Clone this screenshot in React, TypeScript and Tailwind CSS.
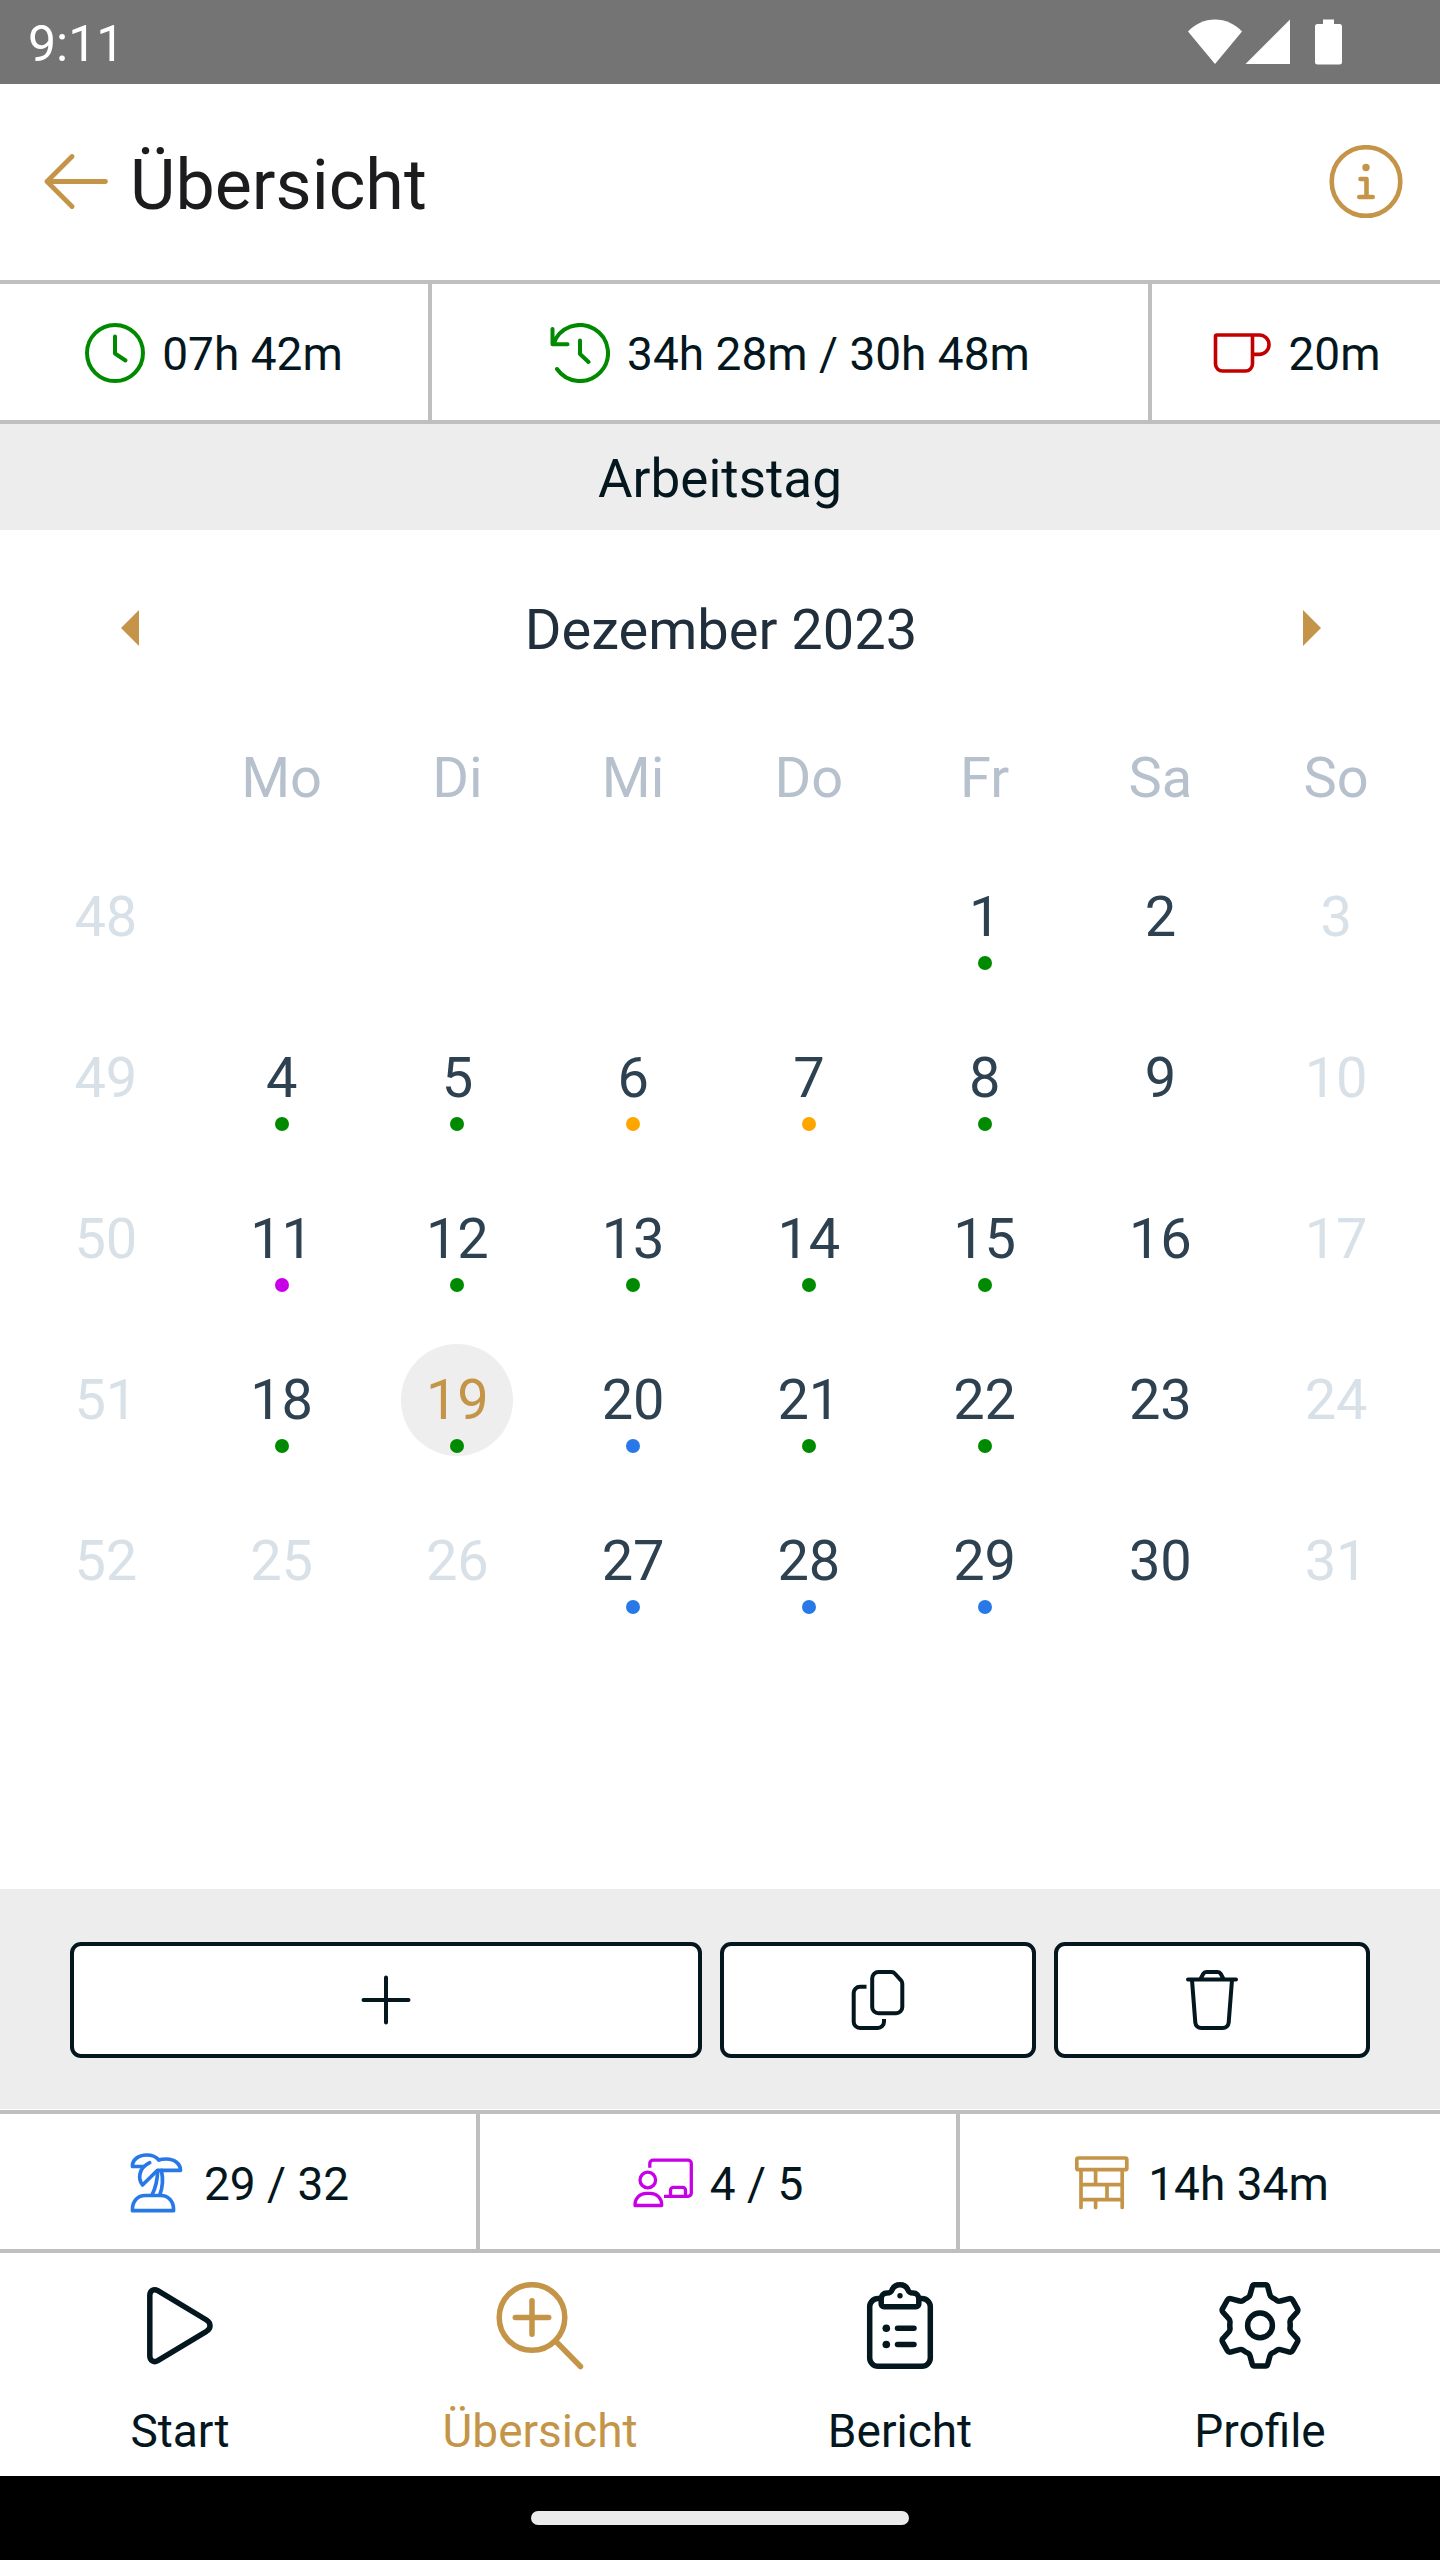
import type { ReactNode } from "react"
import clsx from "clsx"

type Mark = "green" | "orange" | "purple" | "blue"

const markColors: Record<Mark, string> = {
  green: "bg-[#008a00]",
  orange: "bg-[#ffa500]",
  purple: "bg-[#c800e8]",
  blue: "bg-[#2878e8]",
}

const weekdays = ["Mo", "Di", "Mi", "Do", "Fr", "Sa", "So"]

const weeks = [
  { week: 48, days: [null, null, null, null, 1, 2, 3] },
  { week: 49, days: [4, 5, 6, 7, 8, 9, 10] },
  { week: 50, days: [11, 12, 13, 14, 15, 16, 17] },
  { week: 51, days: [18, 19, 20, 21, 22, 23, 24] },
  { week: 52, days: [25, 26, 27, 28, 29, 30, 31] },
]

const marks: Record<number, Mark> = {
  1: "green",
  4: "green",
  5: "green",
  6: "orange",
  7: "orange",
  8: "green",
  11: "purple",
  12: "green",
  13: "green",
  14: "green",
  15: "green",
  18: "green",
  19: "green",
  20: "blue",
  21: "green",
  22: "green",
  27: "blue",
  28: "blue",
  29: "blue",
}

// Sundays and public holidays
const daysOff = [3, 10, 17, 24, 25, 26, 31]
const selectedDay = 19

function StatIcon({ className, strokeWidth = 4, children }: { className?: string; strokeWidth?: number; children: ReactNode }) {
  return (
    <svg
      viewBox="0 0 60 60"
      className={clsx("size-[60px] shrink-0", className)}
      fill="none"
      stroke="currentColor"
      strokeWidth={strokeWidth}
      strokeLinecap="round"
      strokeLinejoin="round"
      aria-hidden="true"
    >
      {children}
    </svg>
  )
}

function TabIcon({ children }: { children: ReactNode }) {
  return (
    <svg
      viewBox="0 0 88 88"
      className="size-[88px]"
      fill="none"
      stroke="currentColor"
      strokeWidth={5.5}
      strokeLinecap="round"
      strokeLinejoin="round"
      aria-hidden="true"
    >
      {children}
    </svg>
  )
}

function Stat({ icon, children }: { icon: ReactNode; children: ReactNode }) {
  return (
    <div className="flex items-center justify-center gap-[17px] border-r-4 border-[#bfbfbf] pt-0.5 last:border-r-0">
      {icon}
      <span className="whitespace-nowrap pt-0.5 text-[46px] leading-[54px]">{children}</span>
    </div>
  )
}

function StatusBar() {
  return (
    <div className="flex h-[84px] items-center justify-between bg-[#747474] pr-[98px] pl-7 text-white">
      <span className="pt-1 text-[50px] leading-none">9:11</span>
      <div className="flex items-center">
        <svg viewBox="0 0 54 46" className="h-[46px] w-[54px]" fill="currentColor" aria-hidden="true">
          <path d="M0 12.500 C7 5 16.500 0.500 27 0.500 S47 5 54 12.500 L27 45 Z" />
        </svg>
        <svg viewBox="0 0 46 46" className="ml-[3px] h-[46px] w-[46px]" fill="currentColor" aria-hidden="true">
          <path d="M45 0.500 V45 H0.500 Z" />
        </svg>
        <svg viewBox="0 0 27 46" className="ml-6 h-[46px] w-[27px]" fill="currentColor" aria-hidden="true">
          <path d="M8 0.500 H19 V5 H24.500 A2.500 2.500 0 0 1 27 7.500 V43 A2.500 2.500 0 0 1 24.500 45.500 H2.500 A2.500 2.500 0 0 1 0 43 V7.500 A2.500 2.500 0 0 1 2.500 5 H8 Z" />
        </svg>
      </div>
    </div>
  )
}

function Header() {
  return (
    <header className="flex h-[196px] items-center justify-between pr-[37px] pl-11">
      <div className="flex items-center gap-[22px]">
        <button type="button" aria-label="Zurück" className="text-[#c49549]">
          <svg
            viewBox="0 0 64 56"
            className="h-14 w-16"
            fill="none"
            stroke="currentColor"
            strokeWidth={4.8}
            strokeLinecap="round"
            strokeLinejoin="round"
          >
            <path d="M61.500 27.500 H3 M28 2.500 L3 27.500 L28 52.500" />
          </svg>
        </button>
        <h1 className="pt-1.5 text-[70px] leading-[82px] text-[#1c1b1d]">Übersicht</h1>
      </div>
      <button type="button" aria-label="Information" className="text-[#c49549]">
        <svg viewBox="0 0 74 74" className="size-[74px]" fill="none" stroke="currentColor" strokeWidth={4.6} strokeLinecap="round" strokeLinejoin="round">
          <circle cx="37" cy="36.500" r="34.300" />
          <path d="M31.500 34 H37.500 V52 M30.300 52 H43.700" />
          <circle cx="37" cy="22.500" r="3.700" fill="currentColor" stroke="none" />
        </svg>
      </button>
    </header>
  )
}

function Calendar() {
  return (
    <main className="flex-1 pt-[70px] pr-4 pl-[18px]">
      <div className="flex items-center justify-between px-[103px] text-[#c49549]">
        <button type="button" aria-label="Vorheriger Monat">
          <svg viewBox="0 0 18 40" className="h-10 w-[18px]" fill="currentColor">
            <path d="M18 0 V36 L0 18 Z" />
          </svg>
        </button>
        <h2 className="text-[56px] leading-[60px] text-[#212f3c]">Dezember 2023</h2>
        <button type="button" aria-label="Nächster Monat">
          <svg viewBox="0 0 18 40" className="h-10 w-[18px]" fill="currentColor">
            <path d="M0 0 V36 L18 18 Z" />
          </svg>
        </button>
      </div>

      <table className="w-full table-fixed text-center text-[56px] leading-none">
        <thead>
          <tr className="text-[#b6c1cd]">
            <td />
            {weekdays.map((day) => (
              <th key={day} scope="col" className="h-[176px] pt-[60px] font-normal">
                {day}
              </th>
            ))}
          </tr>
        </thead>
        <tbody>
          {weeks.map(({ week, days }) => (
            <tr key={week}>
              <th scope="row" className="h-[161px] font-normal text-[#d9e1e8]">
                {week}
              </th>
              {days.map((day, i) => (
                <td key={i} className="h-[161px]">
                  {day && (
                    <button
                      type="button"
                      disabled={daysOff.includes(day)}
                      className={clsx(
                        "relative mx-auto flex size-28 items-center justify-center rounded-full",
                        day === selectedDay && "bg-[#eeeeee] text-[#c49549]",
                        day !== selectedDay && (daysOff.includes(day) ? "text-[#d9e1e8]" : "text-[#2d4150]"),
                      )}
                    >
                      {day}
                      {marks[day] && (
                        <span className={clsx("absolute bottom-[3px] left-1/2 size-3.5 -translate-x-1/2 rounded-full", markColors[marks[day]])} />
                      )}
                    </button>
                  )}
                </td>
              ))}
            </tr>
          ))}
        </tbody>
      </table>
    </main>
  )
}

function Actions() {
  const button = "flex h-[116px] items-center justify-center rounded-[11px] border-4 border-[#04171e] bg-white"
  return (
    <div className="mb-px grid grid-cols-[2fr_1fr_1fr] gap-[18px] bg-[#ededed] px-[70px] pt-[53px] pb-[51px]">
      <button type="button" aria-label="Hinzufügen" className={button}>
        <StatIcon>
          <path d="M30 7.500 V52.500 M7.500 30 H52.500" />
        </StatIcon>
      </button>
      <button type="button" aria-label="Kopieren" className={button}>
        <StatIcon>
          <path d="M30.500 2 H43.500 Q45.500 2 46.800 3.500 L53 10.300 Q54.300 11.800 54.300 13.800 V37 A6.300 6.300 0 0 1 48 43.300 H30.500 A6.300 6.300 0 0 1 24.200 37 V8.300 A6.300 6.300 0 0 1 30.500 2 Z" />
          <path strokeLinecap="butt" d="M18.500 16.700 H12 A6.300 6.300 0 0 0 5.700 23 V51.700 A6.300 6.300 0 0 0 12 58 H29.700 A6.300 6.300 0 0 0 36 51.700 V49" />
        </StatIcon>
      </button>
      <button type="button" aria-label="Löschen" className={button}>
        <StatIcon>
          <path d="M6 9.500 H54 M18.500 9 L21.300 3.800 Q22.300 2 24.300 2 H35.700 Q37.700 2 38.700 3.800 L41.500 9" />
          <path d="M10 10 L13.300 52.500 A6 6 0 0 0 19.300 58 H40.700 A6 6 0 0 0 46.700 52.500 L50 10" />
        </StatIcon>
      </button>
    </div>
  )
}

const tabs = [
  {
    label: "Start",
    icon: <path d="M13.800 13.500 C13.800 8.500 17.800 6.300 21.800 8.700 L70.500 38 C75.200 41 75.200 46.300 70.500 49.300 L21.800 78.600 C17.800 81 13.800 78.800 13.800 73.800 Z" />,
  },
  {
    label: "Übersicht",
    active: true,
    icon: (
      <>
        <circle cx="36" cy="35.500" r="32.800" />
        <path d="M36 18.800 V52.200 M19.300 35.500 H52.700 M60 59.500 L84.500 84.500" />
      </>
    ),
  },
  {
    label: "Bericht",
    icon: (
      <>
        <path d="M25.200 22 V16.800 C25.200 13.500 27.500 11 31 11 C34 11 35 10.500 36 8 C37.500 4.500 40.500 2.800 44 2.800 S50.500 4.500 52 8 C53 10.500 54 11 57 11 C60.500 11 62.800 13.500 62.800 16.800 V22 A2.700 2.700 0 0 1 60.100 24.700 H27.900 A2.700 2.700 0 0 1 25.200 22 Z" />
        <path d="M63.500 16.500 H66 A8.300 8.300 0 0 1 74.300 24.800 V76 A8.300 8.300 0 0 1 66 84.300 H22 A8.300 8.300 0 0 1 13.700 76 V24.800 A8.300 8.300 0 0 1 22 16.500 H24.500" />
        <path d="M41.500 46.300 H58 M41.500 62.500 H58" />
        <g fill="currentColor" stroke="none">
          <circle cx="44" cy="13.800" r="2.700" />
          <circle cx="30.300" cy="46.300" r="3.800" />
          <circle cx="30.300" cy="62.500" r="3.800" />
        </g>
      </>
    ),
  },
  {
    label: "Profile",
    icon: (
      <>
        <path d="M38.500 2.800 H49.500 Q51.300 2.800 51.700 4.500 L54 13 Q54.500 14.800 56.200 15.600 Q59 17 61 18.600 Q62.800 19.600 64.500 19 L73.500 16.600 Q75.600 16.200 76.600 18 L81.500 26.800 Q82.400 28.700 81 30.200 L75 37 Q73.800 38.500 74 40.300 Q74.400 43.300 74 46.400 Q73.800 48.200 75 49.700 L81 56.500 Q82.400 58 81.500 59.900 L76.600 68.700 Q75.600 70.500 73.500 70.100 L64.500 67.700 Q62.800 67.100 61 68.100 Q59 69.700 56.200 71.100 Q54.500 71.900 54 73.700 L51.700 82.200 Q51.300 84 49.500 84 H38.500 Q36.700 84 36.300 82.200 L34 73.700 Q33.500 71.900 31.800 71.100 Q29 69.700 27 68.100 Q25.200 67.100 23.500 67.700 L14.500 70.100 Q12.400 70.500 11.400 68.700 L6.500 59.900 Q5.600 58 7 56.500 L13 49.700 Q14.200 48.200 14 46.400 Q13.600 43.400 14 40.300 Q14.200 38.500 13 37 L7 30.200 Q5.600 28.700 6.500 26.800 L11.400 18 Q12.400 16.200 14.500 16.600 L23.500 19 Q25.200 19.600 27 18.600 Q29 17 31.800 15.600 Q33.500 14.800 34 13 L36.300 4.500 Q36.700 2.800 38.500 2.800 Z" />
        <circle cx="44" cy="43.400" r="12.400" />
      </>
    ),
  },
]

export default function App() {
  return (
    <div className="flex min-h-screen flex-col bg-white font-[Roboto,sans-serif] text-[#04171e]">
      <StatusBar />
      <Header />

      {/* Worked time */}
      <section className="grid h-36 grid-cols-[3fr_5fr_2fr] border-y-4 border-[#bfbfbf]">
        <Stat
          icon={
            <StatIcon className="text-[#008a00]">
              <circle cx="30" cy="30" r="28" />
              <path d="M30 13.500 V30.500 L40.500 37.500" />
            </StatIcon>
          }
        >
          07h 42m
        </Stat>
        <Stat
          icon={
            <StatIcon className="text-[#008a00]">
              <path d="M3.500 21 A28 28 0 1 1 7 46 M2.500 6 V21.300 H17.500 M30 17.500 V31 L38.500 39" />
            </StatIcon>
          }
        >
          34h 28m / 30h 48m
        </Stat>
        <Stat
          icon={
            <StatIcon className="text-[#c20000]" strokeWidth={3.6}>
              <path d="M41.500 12 V41 A7 7 0 0 1 34.500 48 H11.500 A7 7 0 0 1 4.500 41 V13.500 A1.500 1.500 0 0 1 6 12 H48.300 A9.700 9.700 0 0 1 48.300 31.400 H41.500" />
            </StatIcon>
          }
        >
          20m
        </Stat>
      </section>

      <p className="h-[106px] bg-[#ededed] pt-1 text-center text-[53px] leading-[102px]">Arbeitstag</p>

      <Calendar />
      <Actions />

      {/* Leave, training and overtime */}
      <section className="grid h-[143px] grid-cols-3 border-y-4 border-[#bfbfbf]">
        <Stat
          icon={
            <StatIcon className="text-[#2878e8]" strokeWidth={3.7}>
              <path d="M5.500 57.700 V56 C5.500 48 11 42.500 18 42.500 H34 C41 42.500 46.500 48 46.500 56 V57.700 Z" />
              <path d="M16.500 13.500 H5.500 C5 7 11.500 2 19.500 2 C25.500 2 29.500 4 31.800 7 C34 6 37 6 39.500 6 C47.500 6 53.500 11 53.500 17.300 H30.500 L15.500 32 C11 26 11 15.500 22.700 9.700" />
              <path d="M30.700 17.500 C30.500 27 28.500 35 25 42 M34.400 17.500 C36.300 26 35.800 34 32.800 42" />
            </StatIcon>
          }
        >
          29 / 32
        </Stat>
        <Stat
          icon={
            <StatIcon className="text-[#c800e8]" strokeWidth={3.3}>
              <circle cx="14.800" cy="27" r="7.800" />
              <path d="M2 52.500 V51.500 A11.200 11.200 0 0 1 13.200 40.300 H17.500 A11.200 11.200 0 0 1 28.700 51.500 V52.500 Z" />
              <path strokeLinecap="butt" d="M16.800 14.700 V10.500 A3.300 3.300 0 0 1 20.100 7.200 H55 A3.300 3.300 0 0 1 58.300 10.500 V40 A3.300 3.300 0 0 1 55 43.300 H31" />
              <path d="M37.500 43 V37.300 A3 3 0 0 1 40.500 34.300 H49.500 A3 3 0 0 1 52.500 37.300 V43" />
            </StatIcon>
          }
        >
          4 / 5
        </Stat>
        <Stat
          icon={
            <StatIcon className="text-[#c49549]" strokeWidth={3.7}>
              <rect x="5.800" y="5" width="50" height="11.700" rx="1.500" />
              <path d="M10 17 V54.500 M51.200 17 V54.500 M10 31.700 H51.200 M10 46.700 H51.200 M24.600 17 V31.700 M36 31.700 V46.700 M24.600 46.700 V54.500" />
            </StatIcon>
          }
        >
          14h 34m
        </Stat>
      </section>

      <nav className="grid grid-cols-4 pt-[29px] pb-[18px]">
        {tabs.map((tab) => (
          <a
            key={tab.label}
            href="#"
            aria-current={tab.active ? "page" : undefined}
            className={clsx("flex flex-col items-center gap-[34px]", tab.active && "text-[#c49549]")}
          >
            <TabIcon>{tab.icon}</TabIcon>
            <span className="text-[46px] leading-[54px]">{tab.label}</span>
          </a>
        ))}
      </nav>

      <div className="flex h-[84px] items-center justify-center bg-black">
        <div className="h-3.5 w-[378px] rounded-full bg-[#ebebeb]" />
      </div>
    </div>
  )
}
